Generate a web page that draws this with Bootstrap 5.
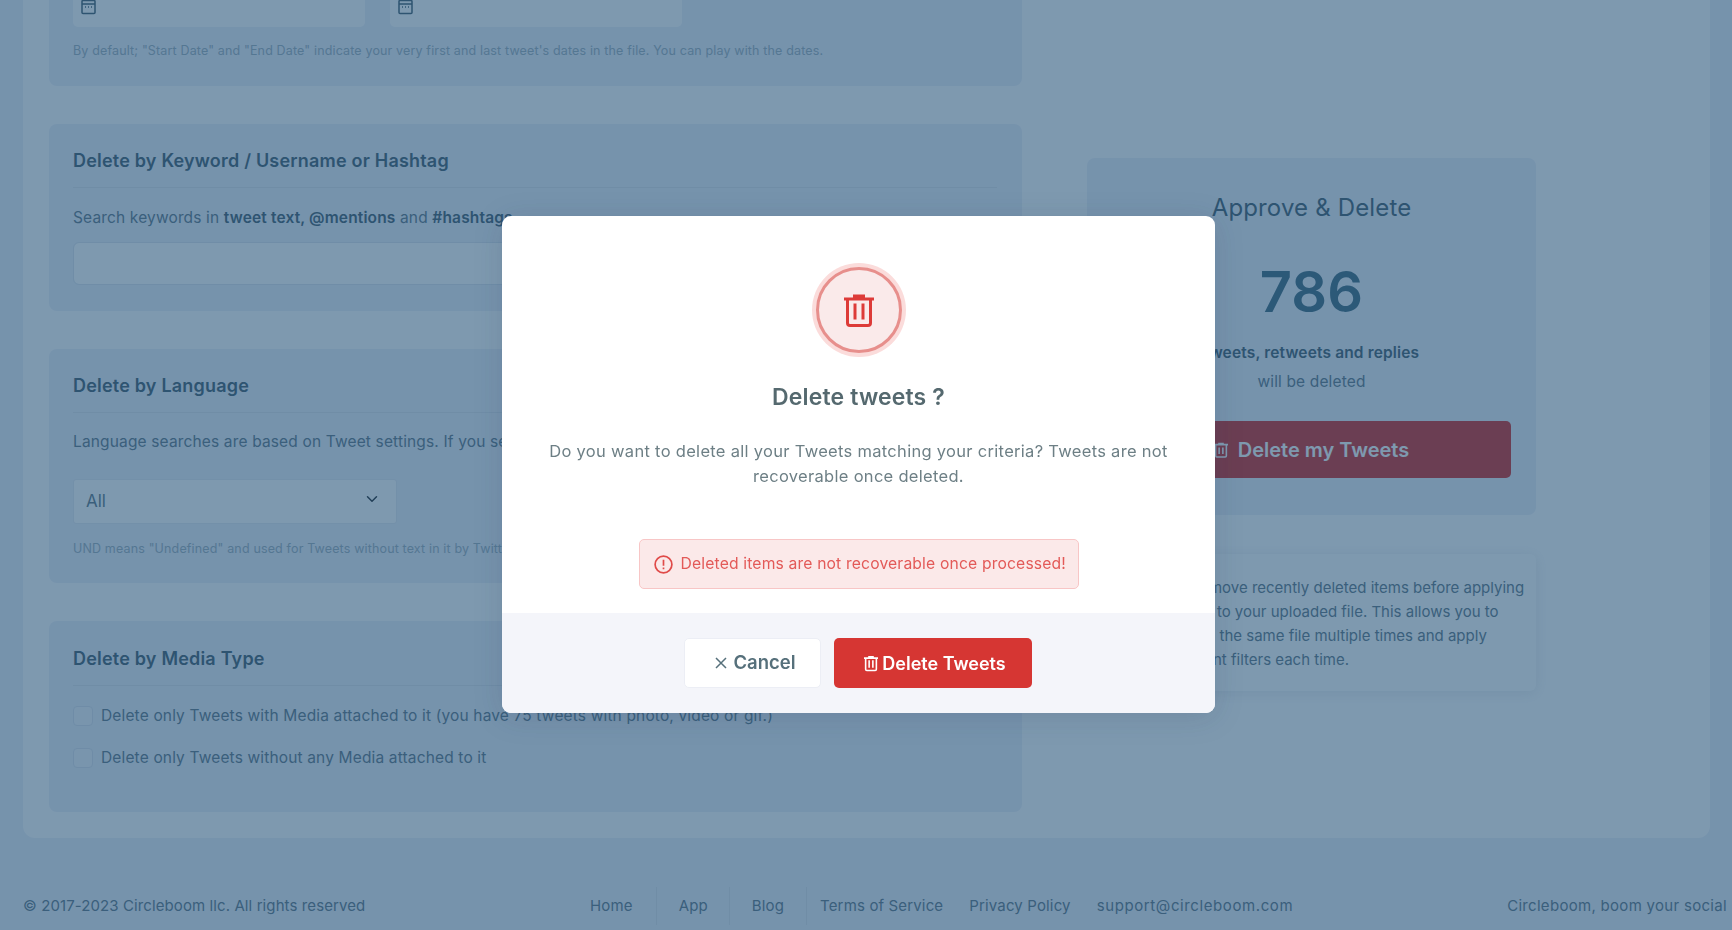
<!DOCTYPE html>
<html lang="en">
<head>
    <meta charset="UTF-8">
    <title>Circleboom - Delete tweets</title>
    <link href="https://cdn.jsdelivr.net/npm/bootstrap@5.3.3/dist/css/bootstrap.min.css" rel="stylesheet">
    <style>
        body { font-family: Inter, "Open Sans", sans-serif; background: #eef1f9; color: #6a7f8e; height: 930px; overflow: hidden; font-size: 15.5px; letter-spacing: .15px; }
        .page-shift { margin-top: -118px; }
        .main-panel { margin: 0 22px 0 23px; background: #fff; border-radius: 0 0 12px 12px; padding: 0 0 26px 26px; display: flex; }
        .left-col { width: 973px; }
        .right-col { width: 449px; margin-left: 65px; padding-top: 276px; }
        .soft-card { background: #eef1f9; border: 0; border-radius: 8px; padding: 0 25px 0 24px; margin-bottom: 38px; }
        .soft-card:last-child { margin-bottom: 0; }
        .card-head { font-size: 18px; font-weight: 600; color: #4e6776; padding: 25px 0 14px; border-bottom: 1px solid #dfe4ec; line-height: 24px; margin: 0; letter-spacing: .2px; }
        .first-card { height: 204px; padding-top: 90px; }
        .date-box { width: 292px; height: 55px; background: #fff; border-radius: 5px; position: relative; }
        .date-box svg { position: absolute; left: 8px; top: 27px; }
        .hint { font-size: 12.5px; color: #a3b3bf; }
        .line-txt { margin: 0; line-height: 24px; }
        .line-txt b { font-weight: 600; color: #4e6776; }
        .kw-input { height: 43px; margin-top: 12px; border-color: #dfe5ee; }
        .lang-select { width: 324px; height: 45px; margin-top: 25px; border-color: #e6eaf1; border-radius: 3px; color: #6a7f8e; background-position: right 16px top 13px; font-size: 17px; padding-left: 12px; }
        .media-check { display: flex; align-items: center; gap: 8px; height: 20px; margin-bottom: 22px; white-space: nowrap; }
        .media-check .form-check-input { width: 20px; height: 20px; margin: 0; flex: none; background-color: #f3f5fb; border-color: #dde3ed; border-radius: 4px; }
        .approve-card { background: #eef1f9; height: 357px; border-radius: 8px; padding: 0 25px; text-align: center; border: 0; }
        .approve-title { font-size: 24px; font-weight: 400; color: #4e6776; margin: 35px 0 0; line-height: 30px; }
        .approve-num { font-size: 56px; font-weight: 600; color: #4b7285; line-height: 68px; margin: 35px 0 0; }
        .approve-bold { font-weight: 600; color: #4e6776; margin: 15px 0 0; line-height: 24px; font-size: 15.5px; }
        .approve-note { margin: 5px 0 0; line-height: 24px; }
        .btn-big-del { background: #d63633; color: #fff; border: 0; width: 399px; height: 57px; border-radius: 5px; font-size: 20px; font-weight: 600; margin-top: 27px; display: flex; align-items: center; justify-content: center; gap: 10px; }
        .info-card { margin-top: 39px; background: #fff; border: 0; border-radius: 6px; box-shadow: 0 2px 14px rgba(70,90,120,.12); height: 137px; padding: 22px 12px 0 25px; font-size: 15px; line-height: 24px; white-space: nowrap; letter-spacing: 0; }
        .foot-row { display: flex; align-items: center; white-space: nowrap; margin-top: 55px; padding-left: 23px; height: 26px; font-size: 15px; }
        .foot-copy { width: 567px; flex: none; letter-spacing: .1px; }
        .foot-links { display: flex; align-items: center; height: 38px; }
        .foot-links a { color: inherit; text-decoration: none; }
        .foot-sep { border-right: 1px solid #dfe4ec; height: 38px; display: flex; align-items: center; }
        .foot-wide { letter-spacing: .6px; }
        .foot-tag { margin-left: 214px; letter-spacing: .3px; }
        .modal-backdrop { --bs-backdrop-bg: rgb(20,69,110); --bs-backdrop-opacity: .55; }
        .modal { overflow: hidden; }
        .del-dialog { max-width: 713px; width: 713px; margin: 216px 0 0 502px; }
        .del-content { height: 497px; border: 0; border-radius: 9px; box-shadow: 0 4px 30px rgba(30,50,80,.15); overflow: hidden; }
        .del-body { padding: 51px 0 0; text-align: center; height: 397px; }
        .icon-ring { width: 86px; height: 86px; margin: 0 auto; border-radius: 50%; background: #faeaea; border: 3px solid #e78f8c; box-shadow: 0 0 0 4px #fbdcdb; display: flex; align-items: center; justify-content: center; }
        .del-title { font-size: 23px; font-weight: 600; color: #55696f; margin: 30px 0 0; line-height: 28px; }
        .del-text { color: #6d7f85; font-size: 16.5px; letter-spacing: .3px; line-height: 25px; margin: 28px auto 0; width: 680px; }
        .del-alert { width: 440px; height: 50px; margin: 50px auto 0; padding: 0 0 0 14px; background: #fbe9e9; border: 1px solid #f8c6c6; border-radius: 5px; color: #e35a58; font-size: 15.7px; display: flex; align-items: center; gap: 8px; white-space: nowrap; }
        .del-foot { height: 100px; background: #f4f5fa; border: 0; border-radius: 0; padding: 25px 0 0 182px; display: flex; align-items: flex-start; justify-content: flex-start; gap: 13px; }
        .del-foot > * { margin: 0; }
        .btn-cancel { width: 137px; height: 50px; padding: 0 0 0 6px; background: #fff; border: 1px solid #eceef5; border-radius: 5px; color: #56707b; font-size: 18.5px; font-weight: 600; display: flex; align-items: center; justify-content: center; gap: 6px; }
        .btn-del { width: 198px; height: 50px; padding: 0 0 0 4px; background: #d63633; border: 0; border-radius: 5px; color: #fff; font-size: 18px; font-weight: 600; display: flex; align-items: center; justify-content: center; gap: 4px; }
    </style>
</head>
<body>

<div class="page-shift">
    <div class="main-panel">
        <div class="left-col">
            <div class="card soft-card first-card">
                <div class="d-flex" style="gap:25px">
                    <div class="date-box"><svg width="15" height="16" viewBox="0 0 15 16" fill="none" stroke="#4e6776" stroke-width="1.5"><rect x="1" y="1.5" width="13" height="13" rx="1"/><path d="M1 5h13M4 8h1M7 8h1M10 8h1"/></svg></div>
                    <div class="date-box"><svg width="15" height="16" viewBox="0 0 15 16" fill="none" stroke="#4e6776" stroke-width="1.5"><rect x="1" y="1.5" width="13" height="13" rx="1"/><path d="M1 5h13M4 8h1M7 8h1M10 8h1"/></svg></div>
                </div>
                <div class="hint" style="margin-top:15px">By default; "Start Date" and "End Date" indicate your very first and last tweet's dates in the file. You can play with the dates.</div>
            </div>

            <div class="card soft-card" style="height:187px">
                <h5 class="card-head">Delete by Keyword / Username or Hashtag</h5>
                <p class="line-txt" style="margin-top:18px">Search keywords in <b>tweet text, @mentions</b> and <b>#hashtags</b></p>
                <input type="text" class="form-control kw-input">
            </div>

            <div class="card soft-card" style="height:234px">
                <h5 class="card-head">Delete by Language</h5>
                <p class="line-txt" style="margin-top:17px">Language searches are based on Tweet settings. If you select</p>
                <select class="form-select lang-select"><option>All</option></select>
                <div class="hint" style="margin-top:16px">UND means "Undefined" and used for Tweets without text in it by Twitter.</div>
            </div>

            <div class="card soft-card" style="height:191px">
                <h5 class="card-head" style="padding-top:26px">Delete by Media Type</h5>
                <div class="media-check" style="margin-top:20px"><input class="form-check-input" type="checkbox"><span>Delete only Tweets with Media attached to it (you have 75 tweets with photo, video or gif.)</span></div>
                <div class="media-check"><input class="form-check-input" type="checkbox"><span>Delete only Tweets without any Media attached to it</span></div>
            </div>
        </div>

        <div class="right-col">
            <div class="card approve-card">
                <h4 class="approve-title">Approve &amp; Delete</h4>
                <div class="approve-num">786</div>
                <p class="approve-bold">tweets, retweets and replies</p>
                <p class="approve-note">will be deleted</p>
                <button class="btn btn-big-del">
                    <svg width="14" height="16" viewBox="0 0 30 33" fill="none" stroke="currentColor" stroke-width="3.4"><path d="M0 5h30M9 2.5h12M3.5 5v24a2.5 2.5 0 0 0 2.5 2.5h18a2.5 2.5 0 0 0 2.5-2.5V5M11 11v14M19 11v14"/></svg>
                    Delete my Tweets
                </button>
            </div>
            <div class="card info-card">
                You should remove recently deleted items before applying<br>
                the new filters to your uploaded file. This allows you to<br>
                quickly upload the same file multiple times and apply<br>
                several different filters each time.
            </div>
        </div>
    </div>

    <div class="foot-row">
        <div class="foot-copy">&copy; 2017-2023 Circleboom llc. All rights reserved</div>
        <div class="foot-links">
            <div class="foot-sep" style="padding-right:23px"><a href="#">Home</a></div>
            <div class="foot-sep" style="padding:0 21px 0 22px"><a href="#">App</a></div>
            <div class="foot-sep" style="padding:0 22px 0 22px"><a href="#">Blog</a></div>
            <a href="#" style="margin-left:13px">Terms of Service</a>
            <a href="#" style="margin-left:26px">Privacy Policy</a>
            <a href="#" class="foot-wide" style="margin-left:26px">support@circleboom.com</a>
        </div>
        <div class="foot-tag">Circleboom, boom your social</div>
    </div>
</div>

<div class="modal-backdrop show"></div>
<div class="modal d-block" tabindex="-1">
    <div class="modal-dialog del-dialog">
        <div class="modal-content del-content">
            <div class="modal-body del-body">
                <div class="icon-ring">
                    <svg width="30" height="33" viewBox="0 0 30 33" fill="none" stroke="#dd3b38" stroke-width="3"><path d="M0 5h30M9 2h12M3.5 5v24a2.5 2.5 0 0 0 2.5 2.5h18a2.5 2.5 0 0 0 2.5-2.5V5M11 9.5v16M19 9.5v16"/></svg>
                </div>
                <h4 class="del-title">Delete tweets ?</h4>
                <p class="del-text">Do you want to delete all your Tweets matching your criteria? Tweets are not recoverable once deleted.</p>
                <div class="alert del-alert" role="alert">
                    <svg width="19" height="19" viewBox="0 0 19 19" fill="none" stroke="#e04b49" stroke-width="1.7"><circle cx="9.5" cy="9.5" r="8.4"/><path d="M9.5 4.8v6M9.5 12.6v1.7"/></svg>
                    Deleted items are not recoverable once processed!
                </div>
            </div>
            <div class="modal-footer del-foot">
                <button class="btn btn-cancel">
                    <svg width="12" height="12" viewBox="0 0 12 12" stroke="#56707b" stroke-width="1.5"><path d="M1 1l10 10M11 1L1 11"/></svg>
                    Cancel
                </button>
                <button class="btn btn-del">
                    <svg width="14" height="17" viewBox="0 0 30 33" fill="none" stroke="#fff" stroke-width="3.4"><path d="M0 5h30M9 2h12M3.5 5v24a2.5 2.5 0 0 0 2.5 2.5h18a2.5 2.5 0 0 0 2.5-2.5V5M11 9.5v16M19 9.5v16"/></svg>
                    Delete Tweets
                </button>
            </div>
        </div>
    </div>
</div>

</body>
</html>
